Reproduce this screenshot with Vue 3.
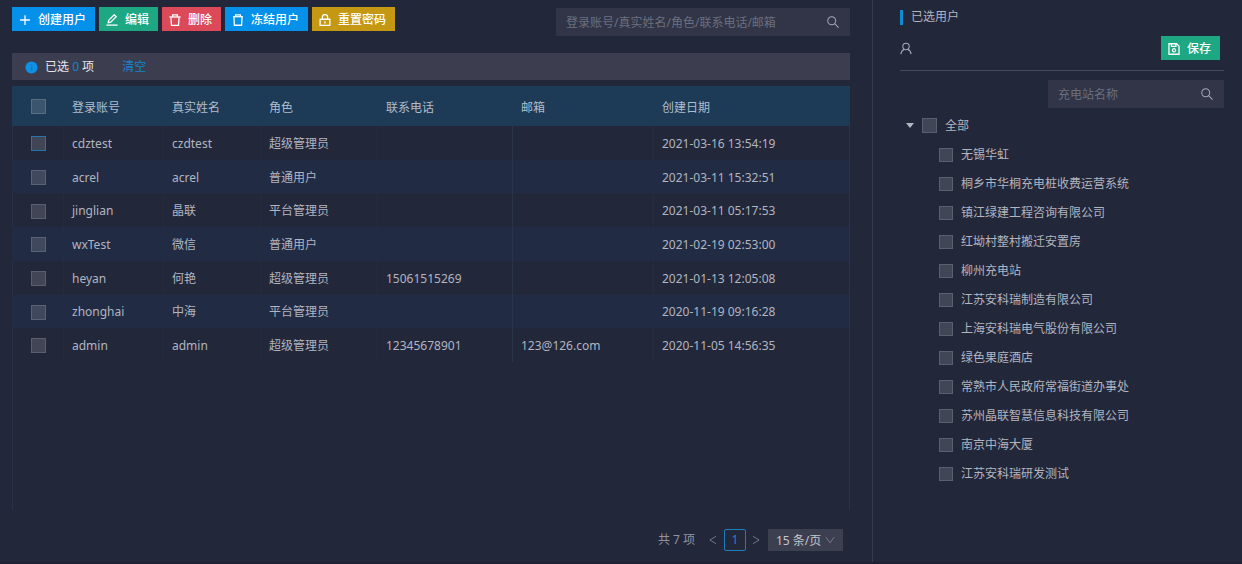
<script setup>
import { computed, ref } from 'vue'

const icons = {
  plus: ['M8 1.500v13M1.500 8h13'],
  edit: ['M.5 14.800h15', 'M3 11.500l.6-3.200 7.300-7.300 2.700 2.700-7.300 7.300z'],
  trash: ['M.5 4h15', 'M4.800 4V1.200h6.400V4', 'M2.600 4.500l.7 10.600h9.400l.7-10.600'],
  freeze: ['M1.500 3.600h13', 'M4.800 3.600V1.200h6.400v2.400', 'M2.600 4l.6 11h9.600l.6-11'],
  lock: ['M1.500 7h13v8.200h-13z', 'M4.500 7V4.300a3.500 3.500 0 0 1 7 0V7', 'M8 9.600v3'],
  search: ['M6.300 1a5.300 5.300 0 1 1 0 10.600a5.300 5.300 0 0 1 0-10.600z', 'M10.200 10.200l5.200 5.200'],
  user: ['M8 1a4.300 4.300 0 1 1 0 8.600a4.300 4.300 0 0 1 0-8.600z', 'M1.200 15.500c.3-3.400 2.200-5.600 4.600-6.600M14.800 15.500c-.3-3.400-2.200-5.600-4.600-6.600'],
  save: ['M1.300 1h10.200l3.200 3.200V15H1.300z', 'M4.600 1.200v3.300h6V1.200', 'M8 7.600a2.100 2.100 0 1 1 0 4.200a2.100 2.100 0 0 1 0-4.200z'],
  left: ['M13 2L3 8l10 6'],
  right: ['M3 2l10 6-10 6'],
  down: ['M1.500 3.500L8 12.500l6.500-9']
}

const actions = [
  { label: '创建用户', icon: 'plus', tone: 'blue' },
  { label: '编辑', icon: 'edit', tone: 'green' },
  { label: '删除', icon: 'trash', tone: 'red' },
  { label: '冻结用户', icon: 'freeze', tone: 'blue' },
  { label: '重置密码', icon: 'lock', tone: 'gold' }
]

const columns = ['登录账号', '真实姓名', '角色', '联系电话', '邮箱', '创建日期']

const users = [
  ['cdztest', 'czdtest', '超级管理员', '', '', '2021-03-16 13:54:19'],
  ['acrel', 'acrel', '普通用户', '', '', '2021-03-11 15:32:51'],
  ['jinglian', '晶联', '平台管理员', '', '', '2021-03-11 05:17:53'],
  ['wxTest', '微信', '普通用户', '', '', '2021-02-19 02:53:00'],
  ['heyan', '何艳', '超级管理员', '15061515269', '', '2021-01-13 12:05:08'],
  ['zhonghai', '中海', '平台管理员', '', '', '2020-11-19 09:16:28'],
  ['admin', 'admin', '超级管理员', '12345678901', '123@126.com', '2020-11-05 14:56:35']
]

const stations = [
  '无锡华虹',
  '桐乡市华桐充电桩收费运营系统',
  '镇江绿建工程咨询有限公司',
  '红坳村整村搬迁安置房',
  '柳州充电站',
  '江苏安科瑞制造有限公司',
  '上海安科瑞电气股份有限公司',
  '绿色果庭酒店',
  '常熟市人民政府常福街道办事处',
  '苏州晶联智慧信息科技有限公司',
  '南京中海大厦',
  '江苏安科瑞研发测试'
]

const selected = ref([])
const chosenStations = ref([])
const expanded = ref(true)
const pageSize = ref('15')

const allUsers = computed({
  get: () => selected.value.length === users.length,
  set: (on) => { selected.value = on ? users.map((u) => u[0]) : [] }
})
const allStations = computed({
  get: () => chosenStations.value.length === stations.length,
  set: (on) => { chosenStations.value = on ? [...stations] : [] }
})
</script>

<template>
  <div class="page">
    <main class="main">
      <div class="toolbar">
        <div class="actions">
          <button v-for="a in actions" :key="a.label" type="button" class="btn" :class="a.tone">
            <svg class="icon" viewBox="0 0 16 16" aria-hidden="true"><path v-for="d in icons[a.icon]" :key="d" :d="d" /></svg>
            <span>{{ a.label }}</span>
          </button>
        </div>
        <label class="search wide">
          <input type="text" aria-label="搜索用户" placeholder="登录账号/真实姓名/角色/联系电话/邮箱" />
          <svg class="icon" viewBox="0 0 16 16" aria-hidden="true"><path v-for="d in icons.search" :key="d" :d="d" /></svg>
        </label>
      </div>

      <div class="notice">
        <svg class="info" viewBox="0 0 14 14" aria-hidden="true"><circle cx="7" cy="7" r="6.500" /><path d="M7 3.500v1M7 6v4.500" /></svg>
        <span>已选 <b>{{ selected.length }}</b> 项</span>
        <button type="button" class="clear" @click="selected = []">清空</button>
      </div>

      <div class="table-box">
        <table>
          <colgroup>
            <col class="c-check" /><col class="c-login" /><col class="c-name" /><col class="c-role" />
            <col class="c-phone" /><col class="c-mail" /><col />
          </colgroup>
          <thead>
            <tr>
              <th class="check"><input v-model="allUsers" type="checkbox" aria-label="全选" /></th>
              <th v-for="c in columns" :key="c">{{ c }}</th>
            </tr>
          </thead>
          <tbody>
            <tr v-for="(u, i) in users" :key="u[0]">
              <td class="check">
                <input v-model="selected" type="checkbox" :value="u[0]" :aria-label="u[0]" :class="{ active: i === 0 }" />
              </td>
              <td v-for="(v, k) in u" :key="k">{{ v }}</td>
            </tr>
          </tbody>
        </table>
      </div>

      <nav class="pager" aria-label="分页">
        <span class="total">共 7 项</span>
        <button type="button" class="arrow" aria-label="上一页"><svg viewBox="0 0 16 16"><path :d="icons.left[0]" /></svg></button>
        <button type="button" class="current">1</button>
        <button type="button" class="arrow" aria-label="下一页"><svg viewBox="0 0 16 16"><path :d="icons.right[0]" /></svg></button>
        <label class="size">
          <select v-model="pageSize" aria-label="每页条数">
            <option value="15">15 条/页</option>
            <option value="30">30 条/页</option>
          </select>
          <svg viewBox="0 0 16 16" aria-hidden="true"><path :d="icons.down[0]" /></svg>
        </label>
      </nav>
    </main>

    <aside class="side">
      <h2>已选用户</h2>
      <div class="user-row">
        <svg class="icon user" viewBox="0 0 16 16" aria-hidden="true"><path v-for="d in icons.user" :key="d" :d="d" /></svg>
        <button type="button" class="btn green">
          <svg class="icon" viewBox="0 0 16 16" aria-hidden="true"><path v-for="d in icons.save" :key="d" :d="d" /></svg>
          <span>保存</span>
        </button>
      </div>
      <label class="search narrow">
        <input type="text" aria-label="搜索充电站" placeholder="充电站名称" />
        <svg class="icon" viewBox="0 0 16 16" aria-hidden="true"><path v-for="d in icons.search" :key="d" :d="d" /></svg>
      </label>
      <div class="tree">
        <div class="node">
          <button type="button" class="caret" aria-label="展开" @click="expanded = !expanded">
            <svg viewBox="0 0 8 5" aria-hidden="true"><path d="M0 0h8L4 5z" /></svg>
          </button>
          <label><input v-model="allStations" type="checkbox" />全部</label>
        </div>
        <ul v-if="expanded">
          <li v-for="s in stations" :key="s" class="node">
            <label><input v-model="chosenStations" type="checkbox" :value="s" />{{ s }}</label>
          </li>
        </ul>
      </div>
    </aside>
  </div>
</template>

<style>
body {
  background: #22273a;
}
</style>

<style scoped>
.page {
  display: flex;
  min-height: 100vh;
  box-sizing: border-box;
  background: #22273a;
  border-bottom: 2px solid #1d2133;
  color: #b2b5c0;
  font: 12px/20px "Noto Sans", "Noto Sans CJK SC", sans-serif;
}
.page * {
  box-sizing: border-box;
}
button,
input,
select {
  font: inherit;
  color: inherit;
  margin: 0;
}
button {
  border: 0;
  padding: 0;
  background: none;
  cursor: pointer;
}
svg {
  flex: none;
  fill: none;
  stroke: currentColor;
  stroke-width: 1.4;
}
.icon {
  width: 12px;
  height: 12px;
}
.main {
  flex: 1;
  min-width: 0;
  display: flex;
  flex-direction: column;
  padding: 7px 22px 11px 12px;
  border-right: 1px solid #373c4e;
}
.toolbar {
  display: flex;
  justify-content: space-between;
  min-height: 29px;
}
.actions {
  display: flex;
  align-items: flex-start;
  gap: 4px;
}
.btn {
  display: flex;
  align-items: center;
  gap: 7px;
  height: 24px;
  padding: 1px 9px 0 7px;
  color: #fff;
  font-weight: 500;
  white-space: nowrap;
}
.btn .icon {
  stroke-width: 1.7;
}
.blue {
  background: #0590ea;
}
.green {
  background: #1ea783;
}
.red {
  background: #dc4a5a;
}
.gold {
  background: #c59814;
}
.search {
  display: flex;
  align-items: center;
  height: 28px;
  padding: 0 11px 0 10px;
  background: #313547;
  color: #a2a5b1;
}
.search input {
  flex: 1;
  min-width: 0;
  padding: 2px 0 0;
  border: 0;
  outline: 0;
  background: none;
}
.search input::placeholder {
  color: #6b6f7f;
  opacity: 1;
}
.wide {
  align-self: flex-end;
  width: 294px;
}
.notice {
  display: flex;
  align-items: center;
  height: 27px;
  margin: 17px 0 6px;
  padding: 1px 0 0 13px;
  background: #3c3e4f;
  color: #e6e7eb;
}
.info {
  width: 13px;
  height: 13px;
  margin-right: 7px;
  fill: #0d90e6;
  stroke: none;
}
.info path {
  stroke: #2c6ea8;
}
.notice b {
  font-weight: 400;
  color: #1482cc;
}
.clear {
  margin-left: 28px;
  color: #1482cc;
}
.table-box {
  flex: 1;
  min-height: 424px;
  border: solid #293246;
  border-width: 0 1px;
}
table {
  width: calc(100% + 2px);
  height: 276px;
  margin: 0 -1px;
  table-layout: fixed;
  border-collapse: separate;
  border-spacing: 0;
}
.c-check {
  width: 52px;
}
.c-login {
  width: 100px;
}
.c-name {
  width: 97px;
}
.c-role {
  width: 117px;
}
.c-phone {
  width: 135px;
}
.c-mail {
  width: 141px;
}
th,
td {
  padding: 2px 8px 0;
  text-align: left;
  font-weight: 400;
  white-space: nowrap;
}
th {
  height: 40px;
  padding-top: 3px;
  background: #1d3a57;
  color: #b0bdcb;
}
td {
  border-right: 1px solid #242c40;
}
td:nth-child(5),
td:nth-child(7) {
  border-right-color: #293448;
}
tbody tr:nth-child(even) {
  background: #212b44;
}
th.check,
td.check {
  padding: 0 0 0 1px;
  text-align: center;
}
input[type='checkbox'] {
  appearance: none;
  flex: none;
  width: 15px;
  height: 15px;
  border: 1px solid rgba(255, 255, 255, 0.26);
  background: rgba(255, 255, 255, 0.14);
  background-clip: padding-box;
  vertical-align: middle;
}
input[type='checkbox'].active {
  border-color: #2276a8;
}
input[type='checkbox']:checked {
  background: #0590ea;
}
.pager {
  display: flex;
  align-items: center;
  justify-content: flex-end;
  height: 22px;
  margin: 19px 7px 0 0;
  color: #9094a2;
}
.total {
  margin-right: 11px;
}
.arrow {
  display: flex;
  align-items: center;
  justify-content: center;
  width: 14px;
  height: 22px;
  color: #7c8090;
}
.arrow svg {
  width: 10px;
  height: 12px;
}
.current {
  width: 22px;
  height: 22px;
  margin: 0 3px 0 4px;
  border: 1px solid #1c7fbd;
  border-radius: 2px;
  color: #1c86cc;
}
.size {
  position: relative;
  display: flex;
  margin-left: 5px;
  color: #c4c6ce;
}
.size select {
  appearance: none;
  width: 75px;
  height: 22px;
  padding: 1px 8px 0;
  border: 0;
  border-radius: 0;
  background: #3c3f50;
}
.size svg {
  position: absolute;
  right: 8px;
  top: 6px;
  width: 10px;
  height: 10px;
  color: #7f8391;
  pointer-events: none;
}
.side {
  width: 369px;
  padding: 7px 18px 0 27px;
}
h2 {
  display: flex;
  align-items: center;
  gap: 8px;
  margin: 0;
  font-size: 12px;
  line-height: 20px;
  font-weight: 400;
}
h2::before {
  content: '';
  width: 3px;
  height: 15px;
  background: #128bd6;
}
.user-row {
  display: flex;
  align-items: center;
  justify-content: space-between;
  height: 44px;
  padding: 0 4px 1px 0;
  border-bottom: 1px solid #454959;
}
.user {
  height: 13px;
  color: #a6a9b5;
}
.narrow {
  width: 176px;
  margin: 9px 0 3px auto;
}
.tree ul {
  list-style: none;
  margin: 0;
  padding: 0 0 0 39px;
}
.node {
  display: flex;
  align-items: center;
  height: 29px;
}
.node label {
  display: flex;
  align-items: center;
  gap: 8px;
}
ul input[type='checkbox'] {
  width: 14px;
  height: 14px;
}
.caret {
  display: flex;
  width: 16px;
  margin-left: 6px;
}
.caret svg {
  width: 8px;
  height: 5px;
  fill: #b4b7c2;
  stroke: none;
}
</style>
